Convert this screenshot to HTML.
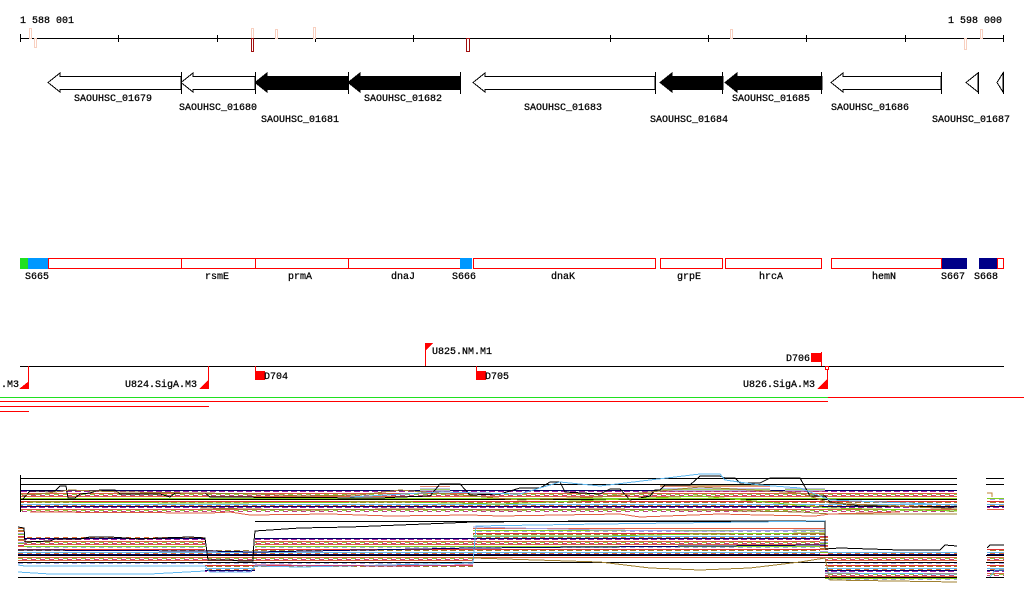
<!DOCTYPE html>
<html><head><meta charset="utf-8"><style>
html,body{margin:0;padding:0;background:#fff;width:1024px;height:611px;overflow:hidden}
svg{display:block}
text{font-family:"Liberation Mono","DejaVu Sans Mono",monospace;font-size:10px;fill:#000;stroke:#000;stroke-width:0.25}
</style></head><body>
<svg width="1024" height="611" viewBox="0 0 1024 611" xmlns="http://www.w3.org/2000/svg" shape-rendering="crispEdges">
<defs>
<pattern id="st" width="9" height="16" patternUnits="userSpaceOnUse">
<rect width="9" height="16" fill="#fff"/>
<rect y="0" width="9" height="1" fill="#e06040"/>
<rect y="2" width="9" height="1" fill="#80d020"/>
<rect y="3" width="5" height="1" fill="#a0a0e0"/>
<rect y="5" width="9" height="1" fill="#e03030"/>
<rect y="6" width="6" height="1" fill="#a08030"/>
<rect y="8" width="9" height="1" fill="#60b8f0"/>
<rect y="9" width="5" height="1" fill="#e07030"/>
<rect y="10" width="9" height="1" fill="#000060"/>
<rect x="3" y="11" width="6" height="1" fill="#a020a0"/>
<rect y="13" width="9" height="1" fill="#e06040"/>
<rect y="14" width="5" height="1" fill="#90c040"/>
<rect x="4" y="15" width="5" height="1" fill="#c04080"/>
</pattern>
<pattern id="st2" width="5" height="9" patternUnits="userSpaceOnUse">
<rect width="5" height="9" fill="#fff"/>
<rect y="0" width="5" height="1" fill="#e06040"/>
<rect y="2" width="5" height="1" fill="#a0a0e0"/>
<rect y="3" width="5" height="1" fill="#80c020"/>
<rect y="5" width="5" height="1" fill="#c03070"/>
<rect y="6" width="5" height="1" fill="#e07030"/>
<rect y="8" width="5" height="1" fill="#a08030"/>
</pattern>
</defs>

<!-- ruler -->
<text x="20" y="23">1 588 001</text>
<text x="948" y="23">1 598 000</text>
<line x1="20" y1="38.5" x2="1004" y2="38.5" stroke="#000"/>
<g stroke="#000">
<line x1="20.5" y1="34" x2="20.5" y2="42"/><line x1="118.5" y1="35" x2="118.5" y2="42"/><line x1="217.5" y1="35" x2="217.5" y2="42"/><line x1="315.5" y1="35" x2="315.5" y2="42"/><line x1="413.5" y1="35" x2="413.5" y2="42"/><line x1="610.5" y1="35" x2="610.5" y2="42"/><line x1="708.5" y1="35" x2="708.5" y2="42"/><line x1="806.5" y1="35" x2="806.5" y2="42"/><line x1="905.5" y1="35" x2="905.5" y2="42"/><line x1="1003.5" y1="35" x2="1003.5" y2="42"/>
</g>
<g fill="none" stroke="#f8d0c0">
<rect x="29.5" y="28.5" width="2" height="10"/><rect x="34.5" y="38.5" width="2" height="9"/>
<rect x="251.5" y="28.5" width="2" height="10"/><rect x="275.5" y="29.5" width="2" height="9"/><rect x="313.5" y="27.5" width="2" height="11"/>
<rect x="730.5" y="29.5" width="2" height="9"/><rect x="964.5" y="38.5" width="2" height="11"/><rect x="980.5" y="29.5" width="2" height="9"/>
</g>
<rect x="251.5" y="38.5" width="2" height="13" fill="none" stroke="#a01010"/>
<rect x="466.5" y="38.5" width="3" height="13" fill="none" stroke="#a01010"/>

<!-- genes -->
<g stroke="#000" stroke-width="1">
<polygon points="181,76.5 60,76.5 60,73 48,82.5 60,92 60,89.5 181,89.5" fill="#fff"/>
<polygon points="255,76.5 193,76.5 193,73 181,82.5 193,92 193,89.5 255,89.5" fill="#fff"/>
<polygon points="348,76.5 267,76.5 267,73 255,82.5 267,92 267,89.5 348,89.5" fill="#000"/>
<polygon points="460,76.5 360,76.5 360,73 348,82.5 360,92 360,89.5 460,89.5" fill="#000"/>
<polygon points="655,76.5 485,76.5 485,73 473,82.5 485,92 485,89.5 655,89.5" fill="#fff"/>
<polygon points="723,76.5 672,76.5 672,73 660,82.5 672,92 672,89.5 723,89.5" fill="#000"/>
<polygon points="822,76.5 737,76.5 737,73 725,82.5 737,92 737,89.5 822,89.5" fill="#000"/>
<polygon points="941,76.5 843,76.5 843,73 831,82.5 843,92 843,89.5 941,89.5" fill="#fff"/>
<polygon points="978,73 966,82.5 978,92" fill="#fff"/>
<polygon points="1003,73 997,82.5 1003,92" fill="#fff"/>
</g>
<g stroke="#000">
<line x1="181.5" y1="72" x2="181.5" y2="94"/><line x1="255.5" y1="72" x2="255.5" y2="94"/><line x1="348.5" y1="72" x2="348.5" y2="94"/><line x1="460.5" y1="72" x2="460.5" y2="94"/><line x1="655.5" y1="72" x2="655.5" y2="94"/><line x1="722.5" y1="72" x2="722.5" y2="94"/><line x1="821.5" y1="72" x2="821.5" y2="94"/><line x1="941.5" y1="72" x2="941.5" y2="94"/><line x1="978.5" y1="72" x2="978.5" y2="94"/><line x1="1003.5" y1="72" x2="1003.5" y2="94"/>
</g>
<text x="113" y="101" text-anchor="middle">SAOUHSC_01679</text>
<text x="218" y="110" text-anchor="middle">SAOUHSC_01680</text>
<text x="300" y="122" text-anchor="middle">SAOUHSC_01681</text>
<text x="403" y="101" text-anchor="middle">SAOUHSC_01682</text>
<text x="563" y="110" text-anchor="middle">SAOUHSC_01683</text>
<text x="689" y="122" text-anchor="middle">SAOUHSC_01684</text>
<text x="771" y="101" text-anchor="middle">SAOUHSC_01685</text>
<text x="870" y="110" text-anchor="middle">SAOUHSC_01686</text>
<text x="971" y="122" text-anchor="middle">SAOUHSC_01687</text>

<!-- regions -->
<rect x="20" y="258" width="8" height="11" fill="#20e020"/>
<rect x="28" y="258" width="20" height="11" fill="#0098ff"/>
<g fill="#fff" stroke="#f00">
<rect x="48.5" y="258.5" width="133" height="10"/><rect x="181.5" y="258.5" width="74" height="10"/><rect x="255.5" y="258.5" width="93" height="10"/><rect x="348.5" y="258.5" width="112" height="10"/>
<rect x="473.5" y="258.5" width="182" height="10"/><rect x="660.5" y="258.5" width="62" height="10"/><rect x="725.5" y="258.5" width="96" height="10"/><rect x="831.5" y="258.5" width="110" height="10"/><rect x="997.5" y="258.5" width="6" height="10"/>
</g>
<rect x="460" y="258" width="12" height="11" fill="#0098ff"/>
<rect x="942" y="258" width="25" height="11" fill="#000088"/>
<rect x="979" y="258" width="18" height="11" fill="#000088"/>
<text x="37" y="279" text-anchor="middle">S665</text>
<text x="217" y="279" text-anchor="middle">rsmE</text>
<text x="300" y="279" text-anchor="middle">prmA</text>
<text x="403" y="279" text-anchor="middle">dnaJ</text>
<text x="464" y="279" text-anchor="middle">S666</text>
<text x="563" y="279" text-anchor="middle">dnaK</text>
<text x="689" y="279" text-anchor="middle">grpE</text>
<text x="771" y="279" text-anchor="middle">hrcA</text>
<text x="884" y="279" text-anchor="middle">hemN</text>
<text x="953" y="279" text-anchor="middle">S667</text>
<text x="986" y="279" text-anchor="middle">S668</text>

<!-- promoters / terminators -->
<line x1="20" y1="366.5" x2="1004" y2="366.5" stroke="#000"/>
<g stroke="#f00" fill="#f00">
<line x1="425.5" y1="343" x2="425.5" y2="366"/><polygon points="426,343 433,343 426,350" stroke="none"/>
<line x1="28.5" y1="366" x2="28.5" y2="389"/><polygon points="29,381 29,389 19,389" stroke="none"/>
<line x1="208.5" y1="366" x2="208.5" y2="389"/><polygon points="208,380 208,389 199,389" stroke="none"/>
<line x1="827.5" y1="369" x2="827.5" y2="389"/><polygon points="827,379 827,389 817,389" stroke="none"/>
<rect x="825.5" y="366.5" width="3" height="3" fill="#fff"/>
<line x1="255.5" y1="366" x2="255.5" y2="371"/><rect x="255" y="371" width="10" height="9" stroke="none"/>
<line x1="476.5" y1="366" x2="476.5" y2="371"/><rect x="476" y="371" width="10" height="9" stroke="none"/>
<line x1="821.5" y1="352" x2="821.5" y2="366"/><rect x="811" y="353" width="10" height="9" stroke="none"/>
</g>
<text x="432" y="354">U825.NM.M1</text>
<text x="1" y="387">.M3</text>
<text x="197" y="387" text-anchor="end">U824.SigA.M3</text>
<text x="815" y="387" text-anchor="end">U826.SigA.M3</text>
<text x="264" y="379">D704</text>
<text x="485" y="379">D705</text>
<text x="810" y="361" text-anchor="end">D706</text>
<rect x="0" y="397" width="828" height="1" fill="#20e020"/>
<rect x="828" y="397" width="196" height="1" fill="#f00"/>
<rect x="0" y="401" width="828" height="1" fill="#f00"/>
<rect x="0" y="406" width="209" height="1" fill="#f00"/>
<rect x="0" y="411" width="29" height="1" fill="#f00"/>

<!-- upper plot -->
<g fill="url(#st)">
<rect x="20" y="490" width="937" height="22"/>
<rect x="987" y="497" width="17" height="13"/>
</g>
<g fill="url(#st2)" opacity="0.7">
<rect x="420" y="486" width="30" height="6"/><rect x="660" y="484" width="110" height="8"/><rect x="785" y="487" width="40" height="5"/>
</g>
<g fill="none" stroke="#000">
<line x1="20" y1="478.5" x2="957" y2="478.5"/><line x1="20" y1="484.5" x2="957" y2="484.5"/>
<line x1="986" y1="478.5" x2="1004" y2="478.5"/><line x1="986" y1="484.5" x2="1004" y2="484.5"/>
<line x1="20.5" y1="475" x2="20.5" y2="512"/>
<line x1="20" y1="499.5" x2="957" y2="499.5"/>
<polyline points="22,500 30,491 55,491 60,486 66,486 68,498 75,498 80,494 90,493 100,490 115,490 120,494 160,494 170,497 175,493 205,493 210,497 380,498 400,497 430,496 440,484 460,484 470,495 500,494 520,488 540,488 550,482 560,482 565,492 600,494 610,489 620,489 630,500 650,496 655,490 660,490 665,485 690,485 700,476 720,476 725,478 735,478 740,483 760,483 770,478 800,478 810,496 825,496 830,502 860,506 957,507"/>
</g>
<g fill="none" stroke-width="1">
<polyline stroke="#a08030" points="22,495 40,494 70,490 120,492 200,493 260,494 300,496 360,495 400,490 460,495 520,500 600,497 700,487 800,493 830,503 957,509"/>
<polyline stroke="#60b8f0" points="350,497 440,492 520,494 560,482 600,486 700,474 720,474 725,480 760,485 800,488 830,500 957,505"/>
<polyline stroke="#80d020" points="30,502 200,503 400,502 500,504 600,500 700,496 830,508 957,511"/>
<polyline stroke="#a08030" points="200,508 300,510 400,509 500,510 600,509 700,510 800,512 830,514 957,514"/>
<polyline stroke="#e06040" points="30,512 210,513 230,512 250,515 330,514 390,516 470,515 500,516 620,514 640,517 720,514 760,515 815,516 830,514 900,512"/>
<polyline stroke="#c08030" points="987,493 992,493 992,497"/>
</g>

<!-- lower plot -->
<g fill="url(#st)">
<rect x="18" y="537" width="187" height="28"/>
<rect x="205" y="550" width="50" height="22"/>
<rect x="255" y="538" width="218" height="30"/>
<rect x="473" y="528" width="352" height="30"/>
<rect x="825" y="552" width="132" height="28"/>
<rect x="987" y="548" width="17" height="28"/>
</g>
<g fill="url(#st2)">
<rect x="18" y="528" width="6" height="20"/>
<rect x="820" y="535" width="8" height="20"/>
</g>
<g fill="none" stroke="#000">
<line x1="18" y1="555.5" x2="957" y2="555.5"/><line x1="18" y1="562.5" x2="957" y2="562.5"/><line x1="18" y1="577.5" x2="957" y2="577.5"/>
<line x1="986" y1="555.5" x2="1004" y2="555.5"/><line x1="986" y1="562.5" x2="1004" y2="562.5"/><line x1="986" y1="577.5" x2="1004" y2="577.5"/>
<polyline points="18,527 24,528 25,542 50,541 55,539 80,539 90,537 110,537 140,539 160,538 190,537 205,538 208,560 230,560 240,561 253,561 254,541 255,531 300,528 350,527 400,525 450,523 473,522 600,521 825,521 825,548"/>
<line x1="255" y1="521.5" x2="825" y2="521.5"/>
<polyline points="825,549 840,548 870,549 900,550 940,550 945,545 957,546"/>
<polyline points="987,548 990,545 1004,545"/>
</g>
<g fill="none">
<polyline stroke="#60b8f0" points="18,565 25,566 205,566 210,572 250,572 255,566 300,567 473,563 476,526 600,524 825,521"/>
<polyline stroke="#60b8f0" points="18,572 50,574 150,574 205,571"/>
<polyline stroke="#a08030" points="473,558 600,562 650,568 700,570 750,568 800,562 825,558 830,580 957,582"/>
<polyline stroke="#c04080" points="255,565 400,566 473,565"/>
<polyline stroke="#a0a0e0" points="473,527 600,530 700,531 825,530"/>
<polyline stroke="#80d020" points="473,536 600,536 700,534 825,533"/>
<polyline stroke="#000060" points="18,550 205,551 255,552 473,548 825,545"/>
<polyline stroke="#60b8f0" points="825,573 957,574"/><polyline stroke="#60b8f0" points="990,577 995,570 1004,570"/>
</g>
</svg>
</body></html>
